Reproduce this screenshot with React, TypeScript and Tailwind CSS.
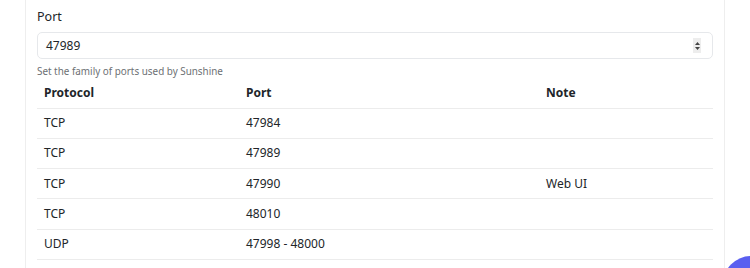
const rows = [
  { protocol: "TCP", port: "47984", note: "" },
  { protocol: "TCP", port: "47989", note: "" },
  { protocol: "TCP", port: "47990", note: "Web UI" },
  { protocol: "TCP", port: "48010", note: "" },
  { protocol: "UDP", port: "47998 - 48000", note: "" },
]

export default function App() {
  return (
    <div
      className="relative h-[268px] w-[750px] overflow-hidden bg-white text-[12px] text-[#212529]"
      style={{ fontFamily: '"Noto Sans", "Open Sans", sans-serif' }}
    >
      <div className="ml-[25px] h-full w-[700px] border-x border-[#eeeeee] px-[11px] pt-[7px]">
        <label className="block text-[12.5px] leading-[20px]">Port</label>
        <div className="mt-[5px] flex h-[27px] items-center rounded-[5px] border border-[#e6e8eb] pl-[8px] pr-[11px]">
          <span className="flex-1 text-[12px]">47989</span>
          <div className="flex h-[15px] w-[8px] flex-col items-center justify-center gap-[2px] bg-[#ededed]">
            <svg width="5" height="3" viewBox="0 0 5 3"><path d="M0 3L2.5 0L5 3Z" fill="#444" /></svg>
            <svg width="5" height="3" viewBox="0 0 5 3"><path d="M0 0L2.5 3L5 0Z" fill="#444" /></svg>
          </div>
        </div>
        <p className="mt-[4px] text-[9.9px] leading-[16px] text-[#6c6f73]">Set the family of ports used by Sunshine</p>
        <table className="w-full border-collapse text-left">
          <thead>
            <tr className="h-[29px] border-b border-[#ececec]">
              <th className="w-[202px] px-[7px] font-bold">Protocol</th>
              <th className="w-[300px] px-[7px] font-bold">Port</th>
              <th className="px-[7px] font-bold">Note</th>
            </tr>
          </thead>
          <tbody>
            {rows.map((r, i) => (
              <tr key={i} className="h-[30.3px] border-b border-[#ececec]">
                <td className="px-[7px]">{r.protocol}</td>
                <td className="px-[7px]">{r.port}</td>
                <td className="px-[7px]">{r.note}</td>
              </tr>
            ))}
          </tbody>
        </table>
      </div>
      <div className="absolute left-[723px] top-[256px] h-[56px] w-[56px] rounded-full bg-[#5a5ff0]" />
    </div>
  )
}
